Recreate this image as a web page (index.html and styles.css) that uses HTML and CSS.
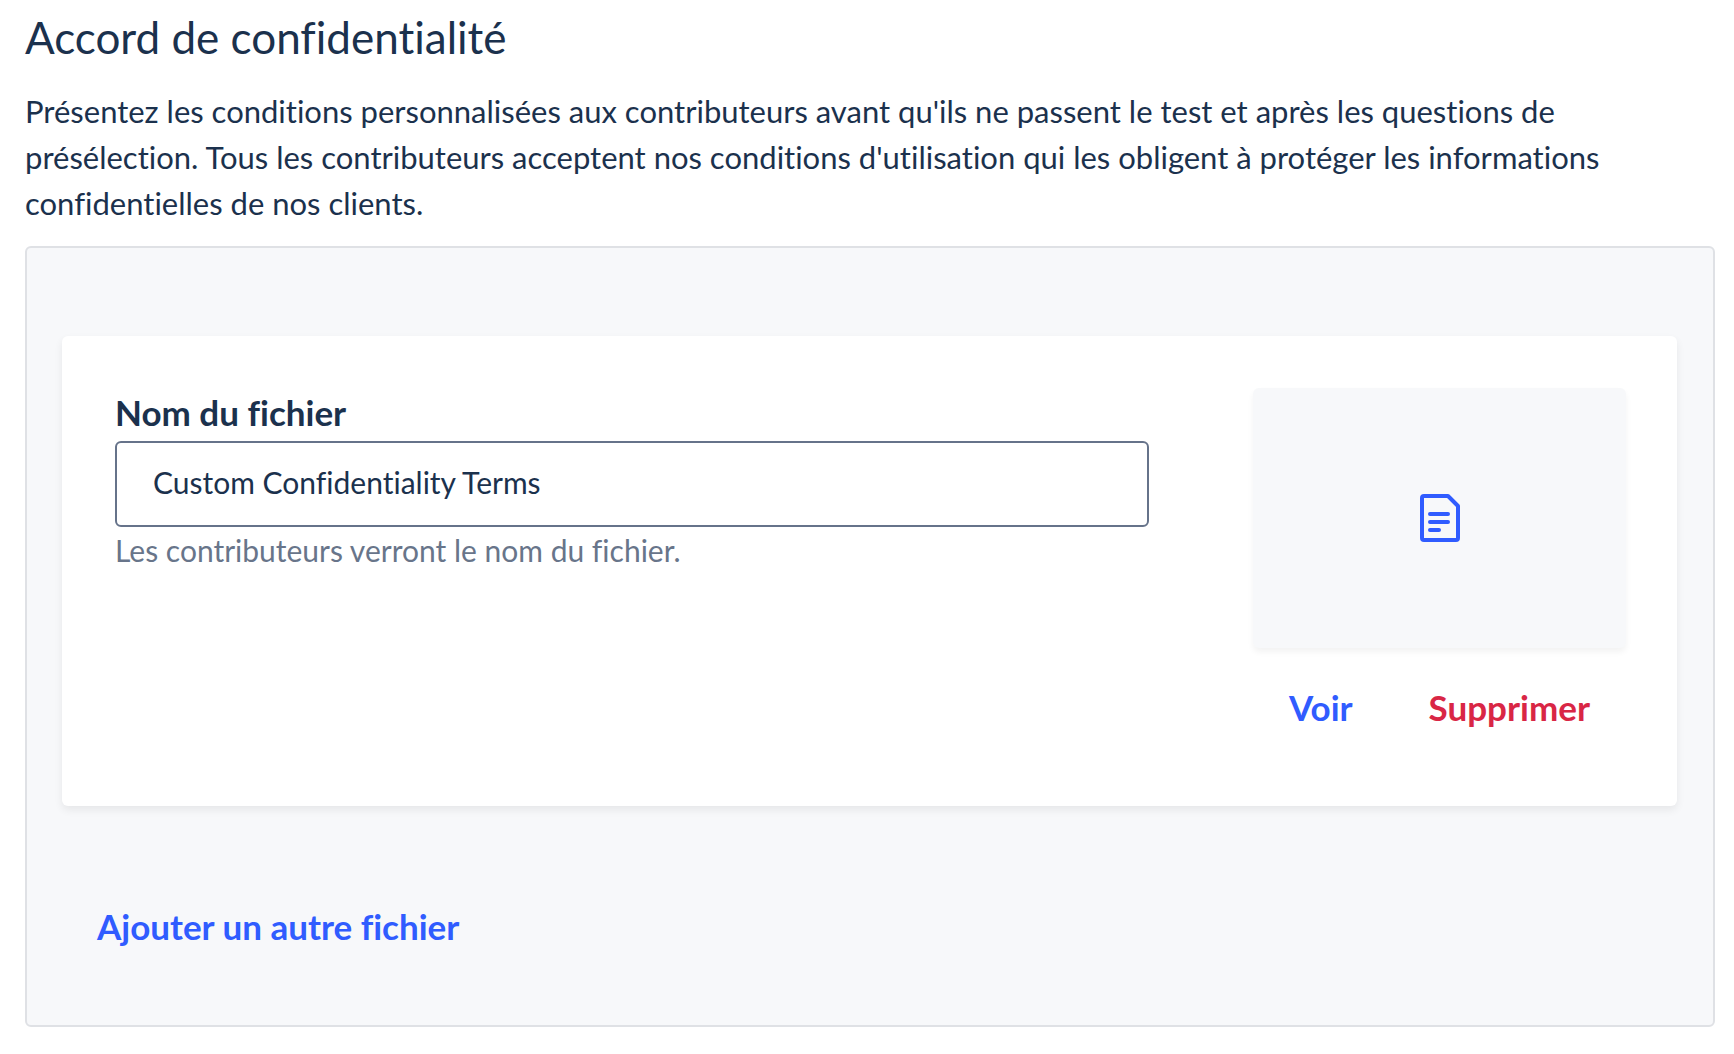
FILE: index.html
```html
<!DOCTYPE html>
<html lang="fr">
<head>
<meta charset="utf-8">
<meta name="viewport" content="width=device-width, initial-scale=1">
<title>Accord de confidentialité</title>
<link rel="stylesheet" href="styles.css">
</head>
<body>
<main class="page">
  <h1 class="title">Accord de confidentialité</h1>
  <p class="intro">Présentez les conditions personnalisées aux contributeurs avant qu'ils ne passent le test et après les questions de présélection. Tous les contributeurs acceptent nos conditions d'utilisation qui les obligent à protéger les informations confidentielles de nos clients.</p>
  <section class="panel">
    <article class="card">
      <div class="field">
        <label class="field-label" for="file-name">Nom du fichier</label>
        <input class="field-input" id="file-name" type="text" value="Custom Confidentiality Terms" aria-describedby="file-help">
        <p class="field-help" id="file-help">Les contributeurs verront le nom du fichier.</p>
      </div>
      <div class="file">
        <div class="preview">
          <svg class="preview-icon" viewBox="0 0 40 48" fill="none" stroke="currentColor" stroke-width="4" stroke-linecap="round" stroke-linejoin="round" aria-hidden="true">
            <path d="M4 2H28L38 12V44Q38 46 36 46H4Q2 46 2 44V4Q2 2 4 2Z"/>
            <path d="M10 20H28M10 28H28M10 36H19"/>
          </svg>
        </div>
        <div class="actions">
          <button class="action" type="button">Voir</button>
          <button class="action action-danger" type="button">Supprimer</button>
        </div>
      </div>
    </article>
    <button class="action action-add" type="button">Ajouter un autre fichier</button>
  </section>
</main>
</body>
</html>
```
FILE: styles.css
```css
* {
  box-sizing: border-box;
}

body {
  margin: 0;
  background: #fff;
  color: #1b314d;
  font-family: Lato, "Open Sans", sans-serif;
  font-size: 30px;
  font-variant-ligatures: none;
  line-height: 46px;
}

.page {
  padding: 11px 19px 24px 25px;
}

.title {
  margin: 0 0 25px;
  font-size: 44px;
  font-weight: 400;
  line-height: 52px;
}

.intro {
  margin: 0 0 20px;
  padding-right: 80px;
  font-size: 31px;
}

.panel {
  display: flex;
  flex-direction: column;
  align-items: flex-start;
  gap: 96px;
  padding: 88px 36px 75px 35px;
  border: 2px solid #dfe1e5;
  border-radius: 6px;
  background: #f7f8fa;
}

.card {
  display: flex;
  align-items: flex-start;
  justify-content: space-between;
  gap: 104px;
  width: 100%;
  padding: 52px 51px 75px 53px;
  border-radius: 6px;
  background: #fff;
  box-shadow: 0 4px 8px rgba(0, 0, 0, 0.07);
}

.field {
  display: flex;
  flex: 1;
  flex-direction: column;
  min-width: 0;
}

.field-label {
  padding-bottom: 5px;
  font-size: 35px;
  font-weight: 700;
  line-height: 48px;
}

.field-input {
  width: 100%;
  height: 86px;
  padding: 0 36px 4px;
  border: 2px solid #66738a;
  border-radius: 6px;
  background: #fff;
  color: inherit;
  font: inherit;
  font-variant-ligatures: none;
}

.field-help {
  margin: 0;
  color: #68758a;
}

.file {
  flex: none;
  width: 373px;
}

.preview {
  display: flex;
  align-items: center;
  justify-content: center;
  height: 260px;
  border-radius: 6px;
  background: #f7f8fa;
  box-shadow: 0 4px 6px rgba(0, 0, 0, 0.05);
}

.preview-icon {
  width: 40px;
  height: 48px;
  color: #305cff;
}

.actions {
  display: flex;
  justify-content: space-between;
  padding: 35px 36px 0;
}

.action {
  padding: 0;
  border: 0;
  background: none;
  color: #305cff;
  font: inherit;
  font-size: 35px;
  font-weight: 700;
  font-variant-ligatures: none;
  line-height: 48px;
  cursor: pointer;
}

.action-danger {
  color: #d92645;
}

.action-add {
  margin-left: 35px;
}
```
